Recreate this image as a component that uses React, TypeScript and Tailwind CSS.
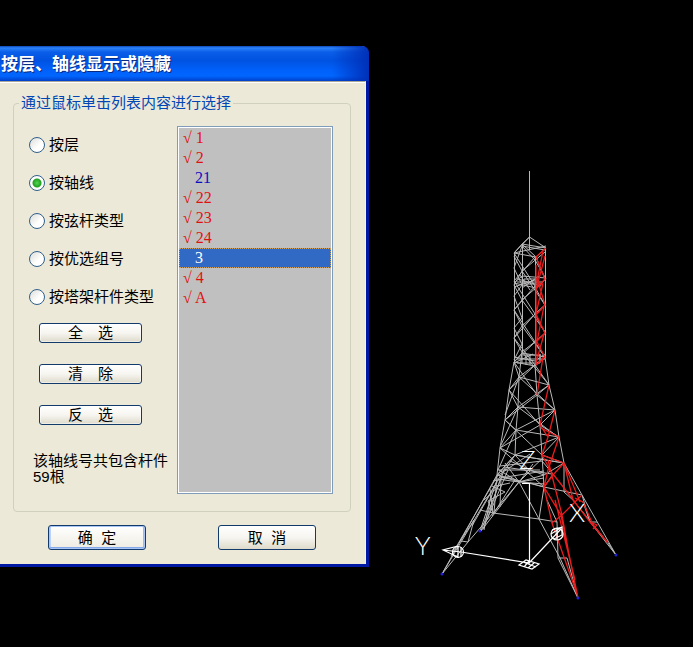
import { useState } from "react";

const modes = ["按层", "按轴线", "按弦杆类型", "按优选组号", "按塔架杆件类型"];

const axes = [
  { id: "1", shown: true },
  { id: "2", shown: true },
  { id: "21", shown: false },
  { id: "22", shown: true },
  { id: "23", shown: true },
  { id: "24", shown: true },
  { id: "3", shown: false },
  { id: "4", shown: true },
  { id: "A", shown: true },
];

function SmallButton({ children }: { children: string }) {
  return (
    <button
      type="button"
      className="h-[20px] w-[103px] rounded-[3px] border border-[#123a6b] bg-gradient-to-b from-white via-[#f6f5f0] to-[#dedacb] leading-[18px] whitespace-pre shadow-[inset_0_0_0_1px_#ffffff80]"
    >
      {children}
    </button>
  );
}

function ModeRadios() {
  const [mode, setMode] = useState("按轴线");
  return (
    <div className="ml-[15px]">
      {modes.map((name) => (
        <label key={name} className="flex h-[38px] items-center gap-[4px] whitespace-nowrap">
          <input
            type="radio"
            name="mode"
            checked={mode === name}
            onChange={() => setMode(name)}
            className="size-[16px] shrink-0 appearance-none rounded-full border border-[#2f5f8c] bg-[linear-gradient(135deg,#dcdcd7,#ffffff_60%)] checked:bg-[radial-gradient(circle,#55d551_0,#21a121_4px,#ffffff_5px)]"
          />
          {name}
        </label>
      ))}
    </div>
  );
}

function AxisList() {
  return (
    <select
      size={18}
      defaultValue="3"
      aria-label="轴线列表"
      className="h-[368px] w-[156px] shrink-0 appearance-none overflow-hidden rounded-none border border-[#7f9db9] bg-[#c0c0c0] bg-clip-padding p-px font-['Liberation_Serif','Noto_Sans_CJK_SC',serif] text-[16px] shadow-[inset_0_0_0_1px_#ffffff] outline-none"
    >
      {axes.map(({ id, shown }) => (
        <option
          key={id}
          value={id}
          className={
            shown
              ? "h-[20px] min-h-0 p-0 pt-px pl-[4px] leading-[19px] text-[#e01010]"
              : "h-[20px] min-h-0 border border-transparent p-0 pl-[15px] leading-[18px] text-[#0d0dc0] checked:border-dotted checked:border-[#d0a060] checked:bg-[linear-gradient(#316ac5,#316ac5)] checked:[-webkit-text-fill-color:#ffffff]"
          }
        >
          {shown ? `√ ${id}` : id}
        </option>
      ))}
    </select>
  );
}

function DisplayDialog() {
  return (
    <section
      aria-label="按层、轴线显示或隐藏"
      className="mt-[46px] w-[369px] shrink-0 self-start rounded-tr-[7px] border-r-[3px] border-b-[3px] border-[#0019a5] bg-[#ece9d8] text-[15px] text-black"
    >
      <header className="-mr-[3px] h-[35px] rounded-tr-[7px] bg-[linear-gradient(90deg,transparent_90%,#0030b8_100%),linear-gradient(#1046b8_0,#2a82fa_2px,#0b5ee8_6px,#0052e0_14px,#0060fa_24px,#0066ff_30px,#003fc8_35px)] pl-px">
        <h1 className="text-[17px] leading-[38px] font-bold text-white [text-shadow:1px_1px_0_#0a2a80]">
          按层、轴线显示或隐藏
        </h1>
      </header>
      <div className="border-t border-r border-t-[#aca899] border-r-[#f4f2e8] pb-[14px] shadow-[inset_0_1px_0_#ffffff]">
        <fieldset className="mt-[11px] mr-[14px] ml-[13px] rounded-[4px] border border-[#d0d0bf] pb-[17px]">
          <legend className="ml-[5px] px-[2px] leading-[20px] text-[#0046b5]">
            通过鼠标单击列表内容进行选择
          </legend>
          <div className="flex pt-[13px] pr-[17px]">
            <div className="flex-1">
              <ModeRadios />
              <div className="mt-[7px] ml-[25px] flex flex-col gap-[21px]">
                <SmallButton>全　选</SmallButton>
                <SmallButton>清　除</SmallButton>
                <SmallButton>反　选</SmallButton>
              </div>
              <p className="mt-[28px] ml-[19px] leading-[16px] whitespace-nowrap">
                该轴线号共包含杆件
                <br />
                59根
              </p>
            </div>
            <AxisList />
          </div>
        </fieldset>
        <div className="mt-[13px] ml-[48px] flex gap-[72px]">
          <button
            type="button"
            className="h-[25px] w-[98px] rounded-[3px] border border-[#123a6b] bg-gradient-to-b from-white to-[#eeece2] leading-[22px] whitespace-pre shadow-[inset_0_0_0_1px_#a9c5f5,inset_0_-2px_0_#84a8ea,inset_2px_0_0_#bcd2f6,inset_-2px_0_0_#9bbbf0]"
          >
            {"确  定"}
          </button>
          <button
            type="button"
            className="h-[25px] w-[98px] rounded-[3px] border border-[#123a6b] bg-gradient-to-b from-white via-[#f6f5f0] to-[#dedacb] leading-[22px] whitespace-pre"
          >
            {"取  消"}
          </button>
        </div>
      </div>
    </section>
  );
}

function TowerView() {
  return (
    <svg
      viewBox="369 0 324 647"
      className="h-auto min-w-0 flex-1 self-start"
      fill="none"
      strokeWidth="1"
      role="img"
      aria-label="塔架模型"
    >
      <g stroke="#b8b8b8">
        {/* mast and cap */}
        <path d="M529.5 171V250M529.5 237L514 253M529.5 237L546 248L536 257L514 253L522 244L546 248M529.5 237L522 244L536 257M514 253L546 246M522 246L545 250" />
        {/* shaft legs */}
        <path d="M514.5 253V362M522.5 244V352M535.5 257V365M545.5 248V357" />
        {/* shaft bracing */}
        <path d="M514 253L535 286L514 310L535 342L514 362M535 257L514 281L535 314L514 338L535 365" />
        <path d="M514 256L522 271L514 285L522 300L514 310L522 326L514 338L522 352M522 246L514 268L522 285L514 296L522 318L514 328L522 344L514 360" />
        <path d="M522 246L535 260L546 279L522 300L546 333L522 352M545 252L522 271L545 305L522 326L545 357" />
        <path d="M536 257L545 279L536 289L545 305L535 314L545 333L535 342L545 357" />
        {/* upper platform */}
        <path d="M514 283L522 276L546 278L536 288ZM514 287L535 280M518 279L541 286M517 282H543M520 275L530 290M522 288L539 276M524 279h12v5h-12z" />
        {/* lower platform */}
        <path d="M514 362L522 353L546 357L535 366ZM514 357L535 361L545 354M514 363L533 354M522 356V363M526 355V365M530 355V365M540 354V363M517 359H545M517 363H540M521 355H541" />
        {/* flared legs */}
        <path d="M514 362L509 390L505 420L500 448L497 475M522 352L519 377L518 407L516 430L515 455L505 470M535 365L537 395L540 425L542 455L544 487M545 357L549 385L555 410L559 437L564 463L582 495" />
        {/* flared bracing */}
        <path d="M514 362L537 395L505 420L542 455M535 365L509 390L540 425L500 448L544 487" />
        <path d="M514 362L519 377L509 390L518 407L505 420L516 430L500 448L515 455L497 475M519 377L505 415M518 407L501 445M516 430L498 470" />
        <path d="M545 357L519 377L549 385L518 407L555 410L516 430L559 437L515 455L564 463M522 352L549 385M519 377L555 410M518 407L558 437" />
        <path d="M535 365L549 385L537 395L555 410L540 425L559 437L542 455L564 463" />
        {/* waist platform */}
        <path d="M497 475L515 455L564 463M497 475L544 487L582 495M497 475L519 482L544 475L564 463M500 466L542 461M498 470L540 470M504 467L552 474M497 476L530 454M510 461L533 471L544 475M500 478L544 471M519 482L544 478M519 482L544 484M519 482L533 464M519 482L505 463M519 482L497 479M519 482L499 470M529 471L544 457M542 461L553 474L544 487M564 463V492M515 455L530 471L519 482" />
        {/* left legs */}
        <path d="M497 475L442 574M499 473L451 556M504 470L442 574M519 482L493 513L468 542L442 574M497 475L494 513M501 478L500 507M505 468L481 531M497 480L480 531M508 470L483 529M519 482L481 531M515 480L492 516M490 489L493 513M484 500L501 484M480 510L493 513L539 519L557 522M496 486L510 483M493 481L510 478M492 486L505 492L488 501L493 513M474 520L468 542L461 541M474 520L459 543M497 482L472 526M491 495L484 530M500 480L487 520" />
        {/* front leg */}
        <path d="M519 482L539 519L560 558L578 598M544 487L539 519M530 483L544 487M557 522L558 558L578 598M559 558H567M567 558L578 598M547 500L557 522" />
        {/* right leg */}
        <path d="M582 495L616 555M582 495L590 522L616 555M564 492L573 500L608 543L616 555M583 502L590 522H597" />
      </g>
      <g stroke="#e81c1c" strokeWidth="1.3">
        <path d="M546 248L536 257L545 279L536 289M543 251L537 281L543 286M545 256L536 290" />
        <path d="M536 265V365M537 278L545 305L537 314M543 283L536 314L545 333L536 342M544 306L537 342L545 357L536 365" />
        <path d="M544 334L536 363M543 357L537 395M549 385L540 425L548 437L542 455M555 410L548 437L542 455L564 463M559 437L548 470L544 487M541 428L559 437" />
        <path d="M542 455L553 475L564 463M553 475L544 487L561 515L578 598M548 460L562 515L570 560L578 598M544 487L552 523L577 594M564 463L573 500L590 522L608 543M553 474L575 502M582 495L562 515L552 523M564 463L580 502M575 498L583 502L593 525L608 543M590 522L597 525L593 529M555 500L575 580" />
      </g>
      {/* axis tripod */}
      <g stroke="#ffffff" strokeWidth="1.2">
        <path d="M522 483.5H529.5V563L461 552M529 563L561 529M519 565L526 560L539 564L532 569ZM523 562L536 567M529 561L524 567M534 563L528 568" />
        <circle cx="458" cy="552" r="5.5" />
        <path d="M458 546L443 550L458 557M443 550L461 552M458 546V558M461 547V557" />
        <circle cx="557" cy="534" r="6" />
        <path d="M551 534L562 527V535L554 539M557 528V540M552 530L562 527" />
      </g>
      <g fill="#ffffff" fontFamily="Lato, sans-serif" fontSize="26" fontWeight="300">
        <text x="415" y="555">Y</text>
        <text x="569" y="522">X</text>
        <text x="520" y="469" fontStyle="italic">Z</text>
      </g>
      <g fill="#2020d8">
        <circle cx="442" cy="574" r="1.5" />
        <circle cx="480" cy="531" r="1.5" />
        <circle cx="578" cy="598" r="1.5" />
        <circle cx="616" cy="555" r="1.5" />
      </g>
    </svg>
  );
}

export default function App() {
  return (
    <main className="flex min-h-screen bg-black font-['Liberation_Sans','Noto_Sans_CJK_SC',sans-serif]">
      <DisplayDialog />
      <TowerView />
    </main>
  );
}
